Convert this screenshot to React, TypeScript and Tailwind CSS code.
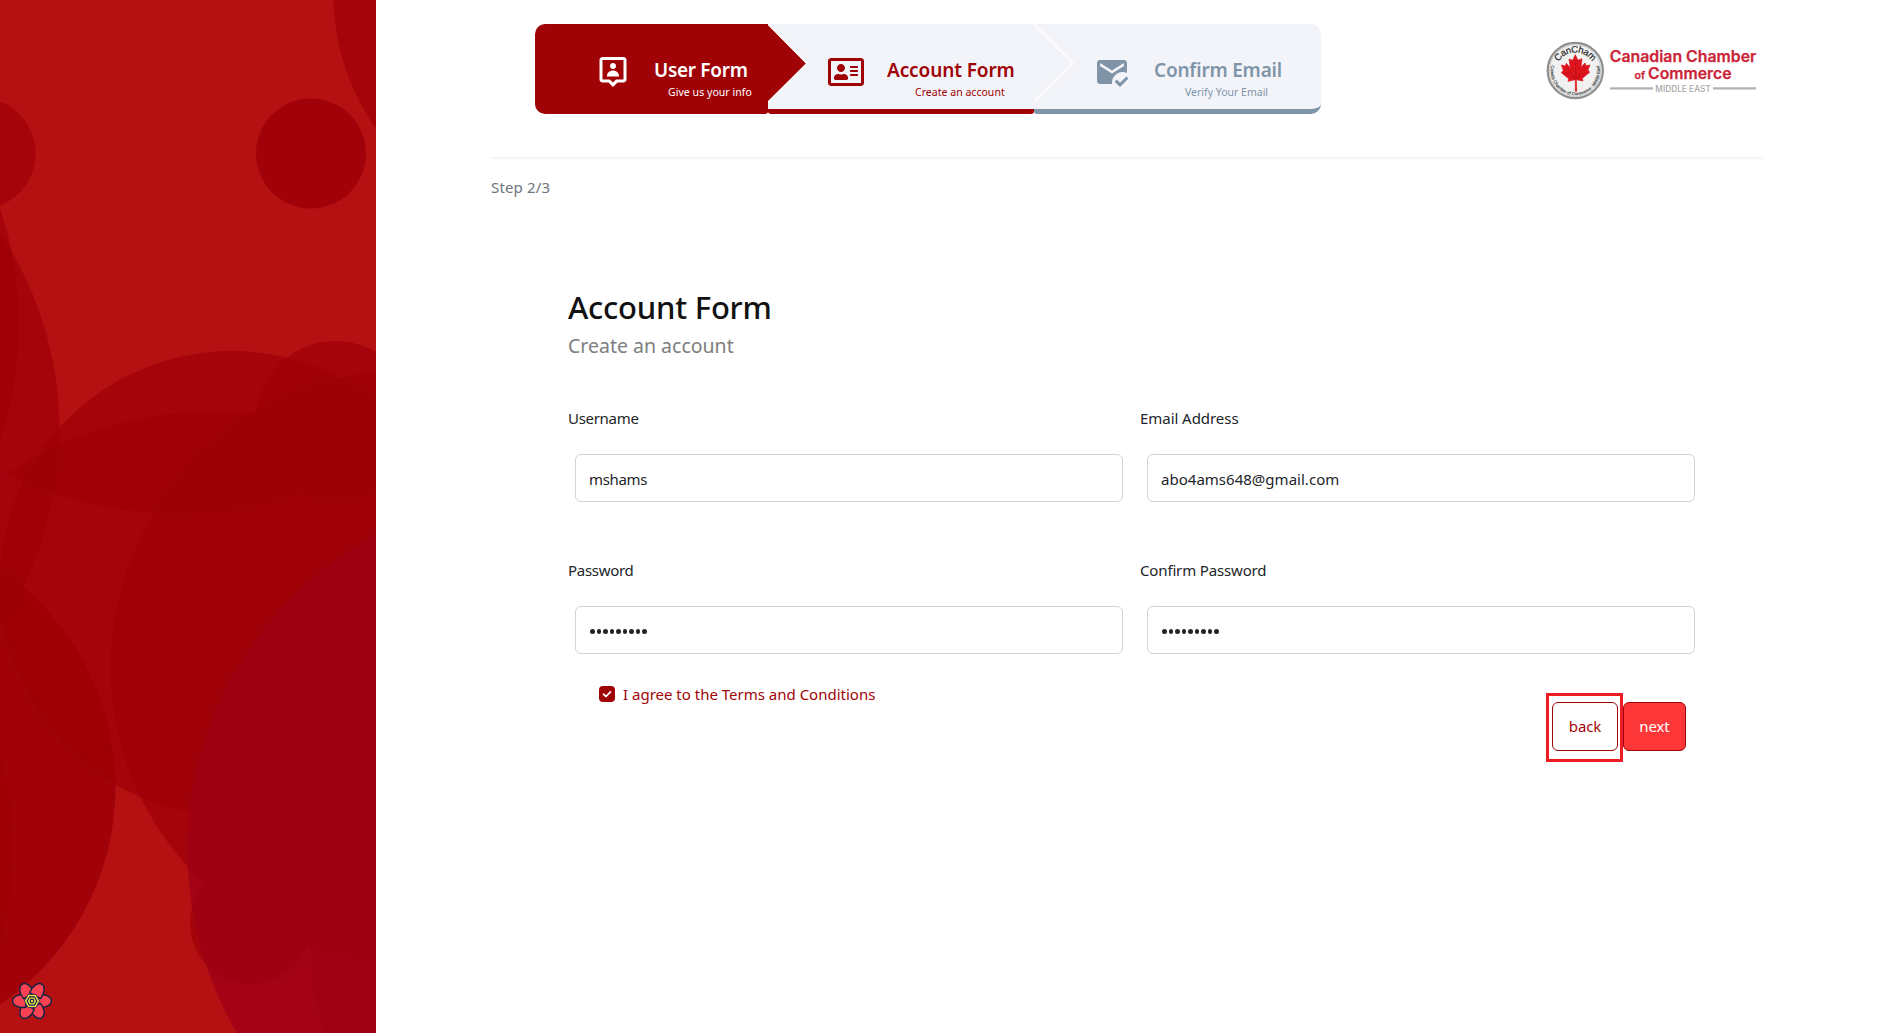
import React from "react";
import { BiUserPin } from "react-icons/bi";
import { FaRegAddressCard } from "react-icons/fa";
import { MdMarkEmailRead } from "react-icons/md";

function SidebarArt() {
  const dark = { fill: "#9d0008", fillOpacity: 0.68 };
  return (
    <svg width="376" height="1033" viewBox="0 0 376 1033" className="block">
      <rect width="376" height="1033" fill="#b51012" />
      <path d="M0 471 L7 474 L0 479Z" fill="#b90f22" />
      <circle cx="565.500" cy="-5" r="232" {...dark} />
      <circle cx="311" cy="153.500" r="55" {...dark} fillOpacity={0.84} />
      <circle cx="-20.500" cy="153.500" r="56" {...dark} />
      <circle cx="-297.500" cy="430" r="357" {...dark} />
      <circle cx="-341" cy="324" r="360" {...dark} />
      <circle cx="232" cy="583.500" r="232.500" {...dark} />
      <path d="M7 474 A372 372 0 0 1 376 448 V456 A380 380 0 0 1 7 474Z" {...dark} />
      <circle cx="335.500" cy="420.500" r="79.500" {...dark} />
      <circle cx="407.500" cy="667" r="297" {...dark} />
      <circle cx="-147" cy="787" r="262.500" {...dark} fillOpacity={0.84} />
      <circle cx="-302" cy="848" r="316" {...dark} />
      <circle cx="250.500" cy="923.500" r="60.500" {...dark} />
      <circle cx="547.500" cy="851" r="360" fill="#9e0015" fillOpacity="0.78" />
      <circle cx="564" cy="950" r="253" fill="#9e0015" fillOpacity="0.6" />
    </svg>
  );
}

function QueryFlower() {
  return (
    <svg width="42" height="40" viewBox="-21 -20 42 40" className="block">
      {[0, 60, 120, 180, 240, 300].map((a) => (
        <path
          key={a}
          transform={`rotate(${a})`}
          d="M6 -6 C12 -7.600 19.400 -4.600 19.400 0 C19.400 4.600 13 6.800 6.500 6.300Z"
          fill="#ff4154"
          stroke="#0b2545"
          strokeWidth="1.400"
          strokeLinejoin="round"
        />
      ))}
      <path d="M-3.800 -6.600H3.800L7.600 0L3.800 6.600H-3.800L-7.600 0Z" fill="#f5e04c" stroke="#0b2545" strokeWidth="0.800" />
      <path d="M-2.400 -4.200H2.400L4.800 0L2.400 4.200H-2.400L-4.800 0Z" fill="#f5e04c" stroke="#0b2545" strokeWidth="1.200" />
      <circle r="1.800" fill="#f5e04c" stroke="#0b2545" strokeWidth="1.200" />
    </svg>
  );
}

function ChamberLogo() {
  return (
    <svg width="212" height="62" viewBox="0 0 212 62" className="block">
      <defs>
        <path id="arc-top" d="M9.800 37 A20 20 0 1 1 48.800 37" />
        <path id="arc-bottom" d="M5.600 24 A24.600 24.600 0 1 0 53 24" />
      </defs>
      <circle cx="29.300" cy="30.500" r="27.600" fill="#f1f1f1" stroke="#8f8f8f" strokeWidth="2.200" />
      <circle cx="29.300" cy="30.500" r="25.800" fill="none" stroke="#c9c9c9" strokeWidth="1" />
      <text fontFamily="Liberation Sans, sans-serif" fontSize="9.500" fill="#2c2c2c" stroke="#2c2c2c" strokeWidth="0.200" textAnchor="middle">
        <textPath href="#arc-top" startOffset="50%" textLength="40">CanCham</textPath>
      </text>
      <text fontFamily="Liberation Sans, sans-serif" fontSize="4.600" fontWeight="700" fill="#4a4a4a" textAnchor="middle">
        <textPath href="#arc-bottom" startOffset="50%" textLength="88">Canada Chamber of Commerce - Middle East</textPath>
      </text>
      <g transform="translate(-4 -2) scale(0.33333)">
        <path
          d="M100 50L108 67L120 62L117 88L129 75L132 83L144 81L138 96L143 103L121 121L123 129L103 125L104 160L100 160L100 125L78 130L80 122L58 104L64 97L58 81L70 84L73 76L85 89L81 63L92 67Z"
          fill="#dd141d"
          stroke="#dd141d"
          strokeWidth="2"
          strokeLinejoin="round"
        />
        <path d="M101 66V124M101 122L74 88M101 122L128 88M101 122L68 103M101 122L134 102" fill="none" stroke="#b30d16" strokeWidth="1.800" />
      </g>
      <g fontFamily="Inter, sans-serif" fontWeight="600" fill="#cb2438" stroke="#cb2438" strokeWidth="0.250">
        <text x="63.800" y="21.800" fontSize="15.500" textLength="146.500" lengthAdjust="spacingAndGlyphs">Canadian Chamber</text>
        <text x="88.500" y="38.800" fontSize="10.500" textLength="10.500" lengthAdjust="spacingAndGlyphs">of</text>
        <text x="102" y="38.800" fontSize="15.500" textLength="83.500" lengthAdjust="spacingAndGlyphs">Commerce</text>
      </g>
      <rect x="64" y="47.300" width="43" height="2.200" fill="#b0b0b0" />
      <rect x="167" y="47.300" width="43" height="2.200" fill="#b0b0b0" />
      <text x="109.300" y="51.600" fontFamily="Inter, sans-serif" fontSize="8.800" fontWeight="500" fill="#a8a8a8" textLength="55.500" lengthAdjust="spacingAndGlyphs">MIDDLE EAST</text>
    </svg>
  );
}

function StepArrow({ color }: { color: string }) {
  return (
    <svg width="42" height="80" viewBox="0 0 42 80" className="absolute left-full top-0 z-10 block">
      <path d="M-1 0L38 39.500L0 78H-1Z" fill={color} />
      <path d="M-1 -1L39 39.500L-1 79" fill="none" stroke="#fff" strokeWidth="1.400" />
    </svg>
  );
}

type FieldProps = { label: string; value: string; type?: string; labelClass: string; valueClass?: string };

function Field({ label, value, type = "text", labelClass, valueClass = "" }: FieldProps) {
  return (
    <div className="w-[572px]">
      <label className={`block h-6 text-[15px] leading-6 text-[#212529] ${labelClass}`}>{label}</label>
      {type === "password" ? (
        <div className="mt-6 ml-[7px] flex h-12 w-[548px] items-center gap-[2px] rounded-md border border-[#ced4da] pt-[3px] pl-[14px]">
          {value.split("").map((_, i) => (
            <span key={i} className="size-[4.5px] rounded-full bg-[#212529]" />
          ))}
        </div>
      ) : (
        <div
          className={`mt-6 ml-[7px] flex h-12 w-[548px] items-center rounded-md border border-[#ced4da] pt-[2px] pl-[13px] text-[15px] leading-6 text-[#212529] ${valueClass}`}
        >
          {value}
        </div>
      )}
    </div>
  );
}

export default function App() {
  return (
    <div className="flex h-[1033px] w-[1879px] overflow-hidden bg-white font-['Noto_Sans',sans-serif]">
      <aside className="relative h-full w-[376px] shrink-0">
        <SidebarArt />
        <button className="absolute bottom-3 left-[11px]" aria-label="Open query devtools">
          <QueryFlower />
        </button>
      </aside>

      <main className="flex-1 pr-[116px] pl-[115px]">
        <header className="flex h-[159px] items-start justify-between border-b-2 border-[#f5f5f6] pt-6 pr-[5px] pl-[44px]">
          <ol className="flex h-[90px]">
            <li className="relative flex w-[233px] rounded-l-[10px] rounded-br-[3px] bg-[#9f0306] pl-[60px] text-white">
              <BiUserPin size={36} className="mt-[30px]" />
              <div className="mt-8 ml-[23px] w-[97px]">
                <div className="text-[19px] leading-7 font-semibold tracking-[-0.3px] whitespace-nowrap">User Form</div>
                <div className="pl-[14px] text-[10.5px] leading-[17px] tracking-[0.05px] whitespace-nowrap">Give us your info</div>
              </div>
              <StepArrow color="#9f0306" />
            </li>
            <li className="relative flex w-[266px] rounded-b-[3px] border-b-[5px] border-[#9f0306] bg-[#f3f4fa] pl-[60px] text-[#9f0306]">
              <FaRegAddressCard size={36} className="mt-[30px]" />
              <div className="mt-8 ml-[23px]">
                <div className="text-[19px] leading-7 font-semibold tracking-[-0.1px] whitespace-nowrap">Account Form</div>
                <div className="pl-[28px] text-[10.5px] leading-[17px] tracking-[0.03px] whitespace-nowrap">Create an account</div>
              </div>
              <StepArrow color="#f3f4fa" />
            </li>
            <li className="relative flex w-[287px] rounded-r-[10px] rounded-bl-[3px] border-b-[5px] border-[#8094a8] bg-[#f3f4fa] pl-[60px] text-[#8094a8]">
              <MdMarkEmailRead size={36} className="mt-[30px]" />
              <div className="mt-8 ml-6">
                <div className="text-[19px] leading-7 font-semibold tracking-[-0.2px] whitespace-nowrap">Confirm Email</div>
                <div className="pl-[31px] text-[10.5px] leading-[17px] whitespace-nowrap">Verify Your Email</div>
              </div>
            </li>
          </ol>
          <div className="pt-4">
            <ChamberLogo />
          </div>
        </header>

        <p className="mt-4 text-[15px] leading-6 tracking-[0.15px] text-[#6c757d]">Step 2/3</p>

        <section className="pt-[88px] pl-[77px]">
          <h1 className="text-[31px] leading-10 font-medium tracking-[-0.22px] text-[#111]">Account Form</h1>
          <p className="mt-1 text-[19.5px] leading-[30px] text-[#7e7e7e]">Create an account</p>

          <form className="mt-[45px]">
            <div className="grid grid-cols-[572px_572px] gap-y-14">
              <Field label="Username" value="mshams" labelClass="tracking-[-0.3px]" valueClass="tracking-[-0.35px]" />
              <Field label="Email Address" value="abo4ams648@gmail.com" labelClass="tracking-[-0.05px]" valueClass="tracking-[0.02px]" />
              <Field label="Password" value="*********" type="password" labelClass="tracking-[-0.3px]" />
              <Field label="Confirm Password" value="*********" type="password" labelClass="tracking-[-0.15px]" />
            </div>

            <div className="flex justify-between pt-7">
              <label className="flex h-6 items-center gap-2 pl-[31px] text-[15px] leading-6 tracking-[0px] text-[#9f0306]">
                <span className="flex size-4 items-center justify-center rounded-[4px] bg-[#9f0306]">
                  <svg width="10" height="10" viewBox="0 0 10 10">
                    <path d="M1.500 5.200L4 7.500L8.500 2.800" fill="none" stroke="#fff" strokeWidth="1.700" strokeLinecap="round" strokeLinejoin="round" />
                  </svg>
                </span>
                I agree to the Terms and Conditions
              </label>
              <div className="mt-[11px] mr-[77px] flex h-[69px] text-[15px] tracking-[-0.1px]">
                <div className="h-[69px] w-[77px] border-[3px] border-[#ed1c24] pt-[6px] pl-[3px]">
                  <button type="button" className="h-[49px] w-[66px] rounded-md border border-[#9f0306] text-[#9f0306]">
                    back
                  </button>
                </div>
                <button type="button" className="mt-[9px] h-[49px] w-[63px] rounded-md border border-[#9f0306] bg-[#fd3737] text-white">
                  next
                </button>
              </div>
            </div>
          </form>
        </section>
      </main>
    </div>
  );
}
